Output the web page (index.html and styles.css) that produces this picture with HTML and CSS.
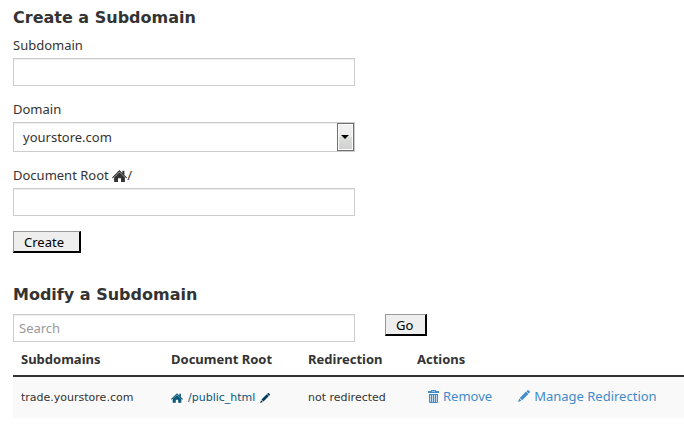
FILE: index.html
```html
<!DOCTYPE html>
<html lang="en">
<head>
    <meta charset="UTF-8">
    <meta name="viewport" content="width=device-width, initial-scale=1.0">
    <title>Subdomains</title>
    <link rel="stylesheet" href="styles.css">
</head>
<body>
    <!-- Shared icons -->
    <svg class="sprite" aria-hidden="true">
        <symbol id="icon-home" viewBox="0 0 15 12">
            <path d="M7.5 0 L10.4 2.9 V0.8 H12.4 V4.9 L15 7.4 L14.2 8.2 L7.5 1.7 L0.8 8.2 L0 7.4 Z M7.5 2.2 L12.9 7.4 V12 H9 V8.2 H6 V12 H2.1 V7.4 Z"/>
        </symbol>
        <symbol id="icon-pencil" viewBox="0 0 12 12">
            <path d="M9.3 0.4 Q10 -0.2 10.7 0.4 L11.6 1.3 Q12.2 2 11.6 2.7 L10.8 3.5 L8.5 1.2 Z M8.1 1.6 L10.4 3.9 L4.1 10.2 L1.8 7.9 Z M1.3 8.6 L3.4 10.7 L0 12 Z"/>
        </symbol>
        <symbol id="icon-trash" viewBox="0 0 11 13">
            <path fill-rule="evenodd" d="M3 1 V0 H8 V1 H11 V3 H0 V1 Z M4 1 V1.6 H7 V1 Z M1 4 H10 V12 Q10 13 9 13 H2 Q1 13 1 12 Z M2.3 5 V12 H3 V5 Z M4.2 5 V12 H4.9 V5 Z M6.1 5 V12 H6.8 V5 Z M8 5 V12 H8.7 V5 Z"/>
        </symbol>
    </svg>

    <div class="container">
        <!-- Create form -->
        <section class="create">
            <h2>Create a Subdomain</h2>
            <form>
                <div class="field">
                    <label for="subdomain">Subdomain</label>
                    <input type="text" id="subdomain" class="form-control">
                </div>
                <div class="field">
                    <label for="domain">Domain</label>
                    <div class="select-wrap">
                        <select id="domain" class="form-control">
                            <option>yourstore.com</option>
                        </select>
                    </div>
                </div>
                <div class="field">
                    <label for="docroot">Document Root <svg class="icon-home"><use href="#icon-home"/></svg>/</label>
                    <input type="text" id="docroot" class="form-control">
                </div>
                <button type="submit" class="btn">Create</button>
            </form>
        </section>

        <!-- Existing subdomains -->
        <section class="modify">
            <h2>Modify a Subdomain</h2>
            <form class="search">
                <input type="text" class="form-control" placeholder="Search" aria-label="Search">
                <button type="submit" class="btn">Go</button>
            </form>
            <table class="subdomains">
                <thead>
                    <tr>
                        <th class="col-name">Subdomains</th>
                        <th class="col-root">Document Root</th>
                        <th class="col-redirect">Redirection</th>
                        <th>Actions</th>
                    </tr>
                </thead>
                <tbody>
                    <tr>
                        <td>trade.yourstore.com</td>
                        <td>
                            <a href="#" class="root"><svg class="icon-home"><use href="#icon-home"/></svg>/public_html<svg class="icon-pencil"><use href="#icon-pencil"/></svg></a>
                        </td>
                        <td>not redirected</td>
                        <td>
                            <div class="actions">
                                <a href="#"><svg class="icon-trash"><use href="#icon-trash"/></svg>Remove</a>
                                <a href="#"><svg class="icon-pencil"><use href="#icon-pencil"/></svg>Manage Redirection</a>
                            </div>
                        </td>
                    </tr>
                </tbody>
            </table>
        </section>
    </div>
</body>
</html>
```
FILE: styles.css
```css
/* General Styles */
*,
*::before,
*::after {
    box-sizing: border-box;
}

body {
    font-family: 'Noto Sans', 'Open Sans', sans-serif;
    font-size: 13px;
    line-height: 18px;
    margin: 0;
    background-color: #fff;
    color: #333;
}

.sprite {
    display: none;
}

svg {
    fill: currentColor;
}

.container {
    padding: 6px 0 0 13px;
}

h2 {
    font-family: 'DejaVu Sans', Verdana, sans-serif;
    font-size: 16px;
    line-height: 24px;
    margin: 0 0 6px;
}

/* Forms */
.create form {
    max-width: 342px;
}

.field {
    margin-bottom: 14px;
}

.field label {
    display: block;
    margin-bottom: 4px;
}

.form-control {
    display: block;
    width: 100%;
    height: 28px;
    padding: 4px 5px;
    border: 1px solid #ccc;
    border-radius: 0;
    background-color: #fff;
    box-shadow: inset 0 1px 1px rgba(0, 0, 0, 0.075);
    color: #333;
    font: inherit;
}

.form-control::placeholder {
    color: #999;
    opacity: 1;
}

.select-wrap {
    position: relative;
}

select.form-control {
    appearance: none;
    height: 30px;
    padding: 4px 24px 4px 9px;
}

/* Drop-down button and its arrow */
.select-wrap::before {
    content: "";
    position: absolute;
    top: 1px;
    right: 1px;
    bottom: 1px;
    width: 17px;
    border: 1px solid #707070;
    box-shadow: inset 0 0 0 1px #fcfcfc;
    background: linear-gradient(#f2f2f2, #ebebeb 50%, #dddfdd 50%, #cfcfcf);
    pointer-events: none;
}

.select-wrap::after {
    content: "";
    position: absolute;
    top: 13px;
    right: 6px;
    border: 4px solid transparent;
    border-top-color: #000;
    border-bottom: 0;
    pointer-events: none;
}

.btn {
    height: 22px;
    padding: 0 12px 0 10px;
    border: solid #000;
    border-width: 1px 2px 2px 1px;
    border-top-color: #999;
    border-left-color: #999;
    background-color: #eee;
    color: #000;
    font: inherit;
    cursor: pointer;
}

.create .btn {
    margin-top: 1px;
    padding-right: 15px;
}

.modify {
    margin-top: 30px;
}

.modify h2 {
    margin-bottom: 7px;
}

.search {
    display: flex;
    align-items: flex-start;
    gap: 30px;
}

.search .form-control {
    max-width: 342px;
}

/* Table */
.subdomains {
    width: 100%;
    table-layout: fixed;
    border-collapse: collapse;
    text-align: left;
}

.subdomains th {
    padding: 8px 0 7px 8px;
    border-bottom: 2px solid #333;
}

.subdomains td {
    padding: 10px 0 9px 8px;
    background-color: #f9f9f9;
    font-family: 'DejaVu Sans', Verdana, sans-serif;
    font-size: 11px;
    vertical-align: middle;
    white-space: nowrap;
}

.col-name {
    width: 150px;
}

.col-root {
    width: 137px;
}

.col-redirect {
    width: 109px;
}

a {
    color: #428bca;
    text-decoration: none;
}

.root {
    display: flex;
    align-items: center;
    gap: 5px;
    color: #095779;
}

.root .icon-pencil {
    color: #003a55;
}

.actions {
    display: flex;
    gap: 26px;
    padding: 0 0 4px 11px;
    font-family: 'Noto Sans', 'Open Sans', sans-serif;
    font-size: 13px;
}

.actions a {
    display: flex;
    align-items: center;
    gap: 4px;
}

/* Icons */
.icon-home {
    width: 15px;
    height: 12px;
    vertical-align: -2px;
}

.root .icon-home {
    width: 12px;
    height: 10px;
}

.icon-trash {
    width: 11px;
    height: 13px;
}

.icon-pencil {
    width: 12px;
    height: 12px;
}

.root .icon-pencil {
    width: 10px;
    height: 10px;
}
```
